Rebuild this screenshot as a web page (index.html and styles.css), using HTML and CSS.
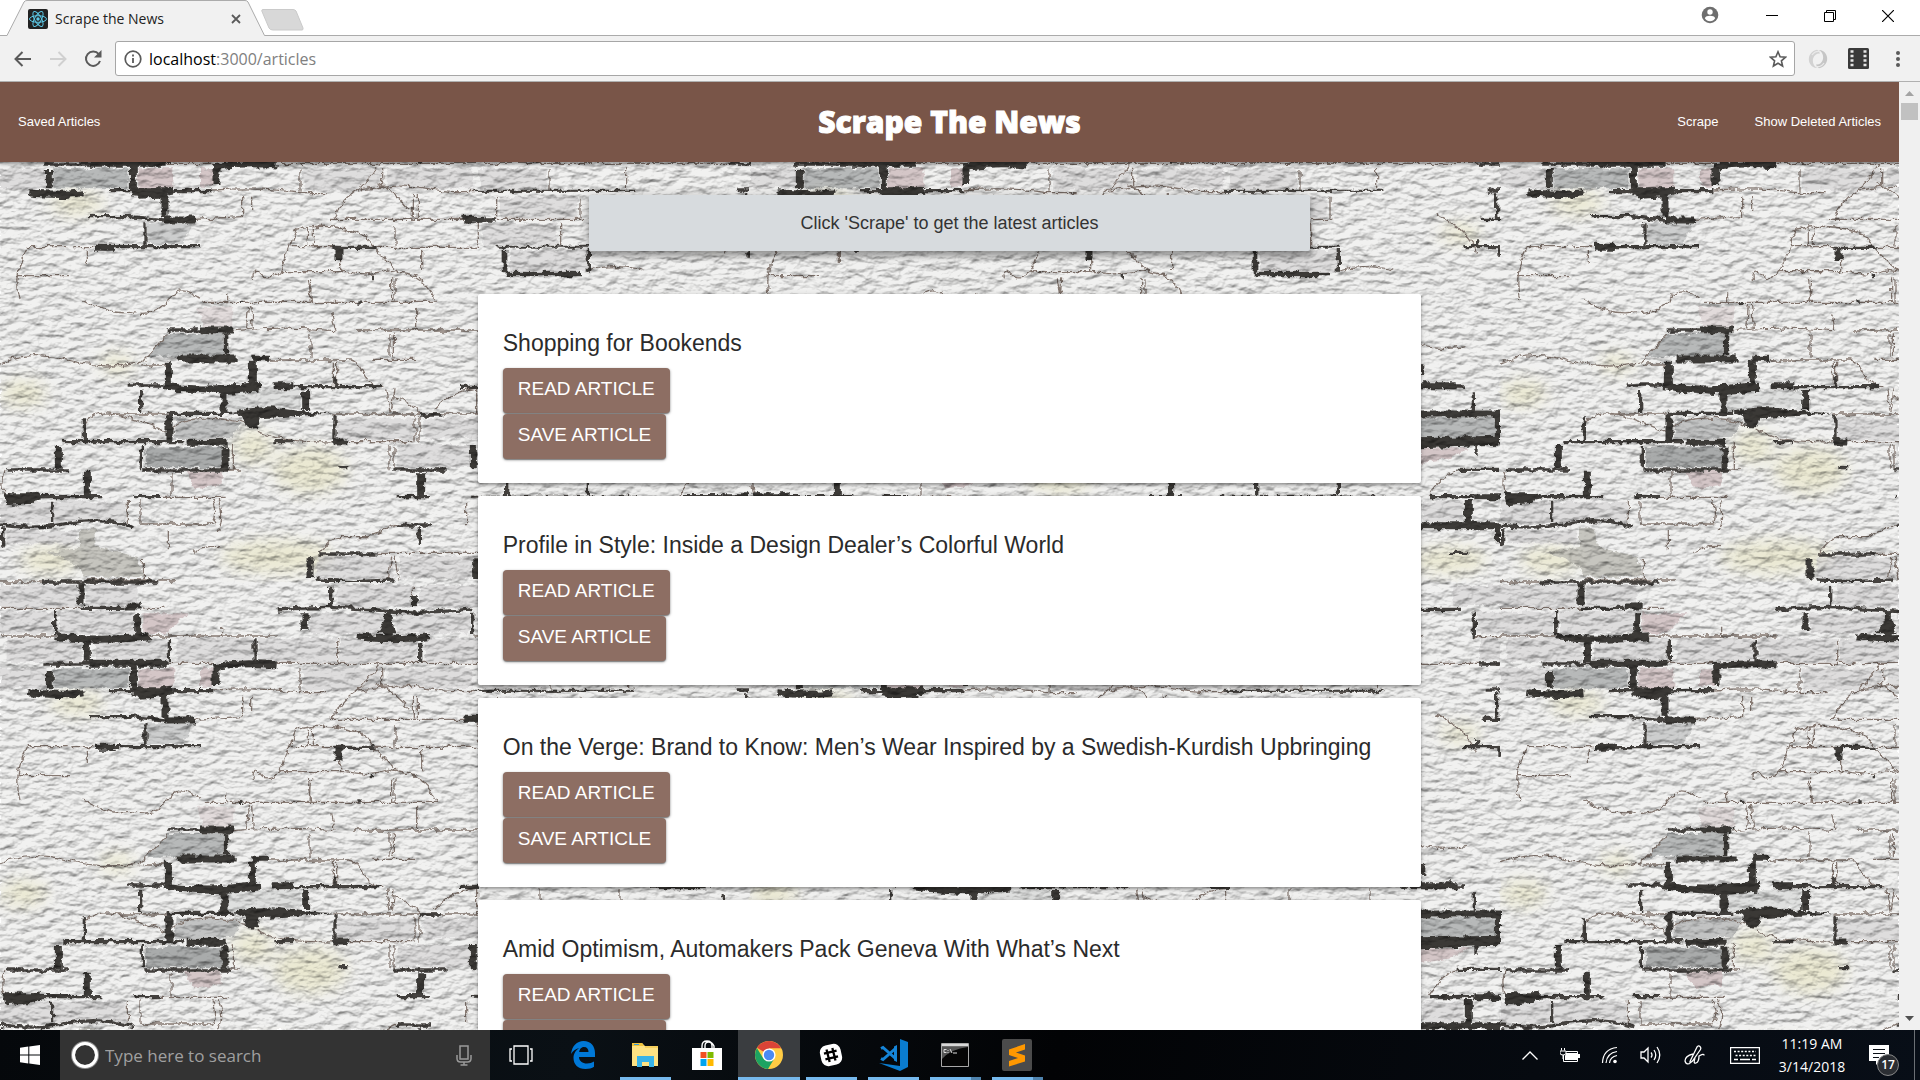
FILE: index.html
```html
<!DOCTYPE html>
<html lang="en">
<head>
<meta charset="utf-8">
<title>Scrape the News</title>
<link rel="stylesheet" href="styles.css">
</head>
<body>
<div class="desktop">

  <header class="tabstrip">
    <div class="tab">
      <svg class="tab-shape" viewBox="0 0 258 36" aria-hidden="true"><path d="M0 36V35.500L17 1.500Q18 .5 20 .5H238Q240 .5 241 2L257.500 35.500V36z" fill="#f1f1f1"/><path d="M0 35.500 17 2Q18 .5 20 .5H238Q240 .5 241 2L257.500 35.500" fill="none" stroke="#ababab"/></svg>
      <svg class="favicon" viewBox="0 0 20 20" aria-hidden="true"><rect width="20" height="20" rx="2" fill="#222"/><g fill="none" stroke="#5cc8e6" stroke-width="1"><ellipse cx="10" cy="10" rx="8.500" ry="3.300"/><ellipse cx="10" cy="10" rx="8.500" ry="3.300" transform="rotate(60 10 10)"/><ellipse cx="10" cy="10" rx="8.500" ry="3.300" transform="rotate(120 10 10)"/></g><circle cx="10" cy="10" r="1.700" fill="#5cc8e6"/></svg>
      <span class="tab-title">Scrape the News</span>
      <button class="tab-close" aria-label="Close tab"><svg width="10" height="10" viewBox="0 0 10 10"><path d="M1 1l8 8M9 1l-8 8" stroke="#5a5a5a" stroke-width="1.800"/></svg></button>
    </div>
    <button class="new-tab" aria-label="New tab"><svg width="43" height="22" viewBox="0 0 43 22"><path d="M2 .5H32Q34 .5 35 2L42 19Q42.500 21 41 21H12Q9 21 8 19L.8 2Q.5.500 2 .5z" fill="#d8d8d8" stroke="#cacaca"/></svg></button>
    <div class="window-controls">
      <button class="profile" aria-label="Profile"><svg width="18" height="18" viewBox="0 0 18 18"><circle cx="9" cy="9" r="8.300" fill="#6e6e6e"/><circle cx="9" cy="6" r="2.700" fill="#fff"/><path d="M3.800 12.200Q5 9.800 9 9.800T14.200 12.200Q12.400 15.200 9 15.200T3.800 12.200z" fill="#fff"/></svg></button>
      <button aria-label="Minimize"><svg width="12" height="12" viewBox="0 0 12 12"><path d="M0 5.500h12" stroke="#000"/></svg></button>
      <button aria-label="Restore"><svg width="12" height="12" viewBox="0 0 12 12"><path d="M.5 2.500h9v9h-9zM2.500 2.500v-2h9v9h-2" fill="none" stroke="#000"/></svg></button>
      <button aria-label="Close"><svg width="12" height="12" viewBox="0 0 12 12"><path d="M0 0l12 12M12 0 0 12" stroke="#000" stroke-width="1.200"/></svg></button>
    </div>
  </header>

  <div class="toolbar">
    <div class="nav-buttons">
      <button aria-label="Back"><svg width="18" height="16" viewBox="0 0 18 16"><path d="M17 8H2M8.500 1 1.500 8l7 7" fill="none" stroke="#5a5a5a" stroke-width="2"/></svg></button>
      <button aria-label="Forward"><svg width="18" height="16" viewBox="0 0 18 16"><path d="M1 8h15M9.500 1l7 7-7 7" fill="none" stroke="#d0d0d0" stroke-width="2"/></svg></button>
      <button aria-label="Reload"><svg width="18" height="18" viewBox="0 0 18 18"><path d="M14.800 4.200A7.200 7.200 0 1 0 16 11" fill="none" stroke="#5a5a5a" stroke-width="2"/><path d="M17.500 0v7.500H10z" fill="#5a5a5a"/></svg></button>
    </div>
    <div class="address">
      <svg width="18" height="18" viewBox="0 0 18 18" aria-hidden="true"><circle cx="9" cy="9" r="7.800" fill="none" stroke="#5a5a5a" stroke-width="1.700"/><path d="M9 8v5M9 4.500v2" stroke="#5a5a5a" stroke-width="1.800"/></svg>
      <span class="url" role="textbox" aria-label="Address">localhost<span class="url-path">:3000/articles</span></span>
      <button class="star" aria-label="Bookmark"><svg width="18" height="18" viewBox="0 0 18 18"><path d="M9 1.800l2.100 4.900 5.400.5-4.100 3.600 1.200 5.200L9 13.200 4.400 16l1.200-5.200L1.500 7.200l5.400-.5z" fill="none" stroke="#5a5a5a" stroke-width="1.600"/></svg></button>
    </div>
    <div class="extensions">
      <button aria-label="Formatter extension"><svg width="20" height="20" viewBox="0 0 20 20"><path d="M9 .8C2 2 -1.500 10 2.500 15.500 4 18 7 19.500 9.500 19 5 17 4 12 5.500 8.500 6.500 6 9 4 12 4.500 11.500 2.500 10 1.500 9 .8z" fill="#d2d2d2"/><path d="M11 19.200C18 18 21.500 10 17.500 4.500 16 2 13 .5 10.500 1 15 3 16 8 14.500 11.500 13.500 14 11 16 8 15.500 8.500 17.500 10 18.500 11 19.200z" fill="#c6c6c6"/><path d="M4 6Q7 1.500 12 2.500M16 14Q13 18.500 8 17.500" fill="none" stroke="#e9e9e9" stroke-width="1.300"/></svg></button>
      <button aria-label="Video extension"><svg width="21" height="21" viewBox="0 0 21 21"><rect width="21" height="21" rx="1.500" fill="#3a3a3a"/><path d="M2.500 3.500h3M2.500 8h3M2.500 12.500h3M2.500 17h3M15.500 3.500h3M15.500 8h3M15.500 12.500h3M15.500 17h3" stroke="#e6e6e6" stroke-width="2.400"/></svg></button>
      <button aria-label="Menu"><svg width="4" height="18" viewBox="0 0 4 18"><g fill="#5a5a5a"><circle cx="2" cy="3" r="2"/><circle cx="2" cy="9" r="2"/><circle cx="2" cy="15" r="2"/></g></svg></button>
    </div>
  </div>

  <div class="viewport">
    <main class="page">
      <svg class="wall" aria-hidden="true">
        <defs>
          <filter id="rough" x="0" y="0" width="100%" height="100%" color-interpolation-filters="sRGB">
            <feTurbulence type="fractalNoise" baseFrequency=".13" numOctaves="4" seed="4" result="n"/>
            <feDisplacementMap in="SourceGraphic" in2="n" scale="7" xChannelSelector="R" yChannelSelector="G" result="bricks"/>
            <feTurbulence type="fractalNoise" baseFrequency=".07 .13" numOctaves="5" seed="11" result="grain"/>
            <feDiffuseLighting in="grain" surfaceScale="2.200" diffuseConstant="1.060" lighting-color="#fff" result="relief"><feDistantLight azimuth="250" elevation="62"/></feDiffuseLighting>
            <feColorMatrix in="relief" type="matrix" values=".9 0 0 0 .11  0 .9 0 0 .11  0 0 .9 0 .11  0 0 0 1 0" result="soft"/>
            <feBlend in="bricks" in2="soft" mode="multiply"/>
          </filter>
          <filter id="blur" x="-60%" y="-60%" width="220%" height="220%"><feGaussianBlur stdDeviation="24"/></filter>
          <pattern id="bricks" width="750" height="500" patternUnits="userSpaceOnUse">
            <rect width="750" height="500" fill="#f1f1f0"/>
            <g transform="scale(.33333) translate(0 54)">
              <g fill="#e8e6c8" fill-opacity=".75" filter="url(#blur)">
                <ellipse cx="230" cy="310" rx="80" ry="35"/><ellipse cx="350" cy="790" rx="50" ry="30"/><ellipse cx="70" cy="880" rx="70" ry="40"/><ellipse cx="760" cy="1040" rx="60" ry="50"/><ellipse cx="930" cy="1110" rx="110" ry="70"/><ellipse cx="830" cy="1370" rx="170" ry="50"/><ellipse cx="150" cy="1380" rx="90" ry="40"/><ellipse cx="2130" cy="400" rx="60" ry="30"/><ellipse cx="2100" cy="1380" rx="110" ry="40"/>
              </g>
              <g fill="#cdcccd" fill-opacity=".55">
                <path d="M0 35h160v66H0zM180 35h225v66H180zM20 115h225v70H20zM285 115h215v70H285zM530 115h230v70H530zM775 115h235v70H775zM1020 115h235v70h-235zM1275 115h200v70h-200zM0 205h140v60H0zM910 205h235v66H910zM1160 205h260v60h-260zM930 40h230v60H930zM1190 40h220v60h-220zM0 1205h150v64H0zM160 1205h220v64H160zM20 1290h210v40H20zM0-45h230v66H0zM260-45h150v66H260zM1010-45h230v66h-230zM1260-45h210v66h-210zM950 1370h230v66H950zM1200 1370h225v66h-225zM1195 1035h220v66h-220zM1010 955h240v66h-240zM1270 955h170v60h-170z"/>
                <path d="M1500 290h230v64h-230zM1450 370h220v64h-220zM1530 450h230v64h-230zM1440 205h200v64h-200zM2180 35h70v66h-70zM2190 115h60v66h-60zM2110-45h140v60h-140zM2020 1205h120v60h-120z"/>
              </g>
              <g fill="#a9abab">
                <path d="M160 205h225v60H160z" opacity=".8"/><path d="M440 370h140l-30 62H440z" opacity=".5"/><path d="M500 702h170v68H440z" opacity=".8"/><path d="M530 955h200l-30 55-180 8z" opacity=".65"/><path d="M437 1042h228v60H437z"/><path d="M682 870h222v50l-222 20z" opacity=".25"/><path d="M2010 955h232v60h-232z" opacity=".8"/>
              </g>
              <g fill="#c8b3b5" opacity=".7"><path d="M415 205h105v60H415zM600 205h40v55h-40zM555 1115h110v40l-80 10zM430 40h130l-60 60h-70zM2010 1045h150l-60 30-90 15z"/><path d="M590 620h110v60l-90 5z" opacity=".5"/></g>
              <path d="M140 1358 240 1340V1285h45l5 55 120 30 20 60H250Q240 1380 140 1358z" fill="#bcbab3" opacity=".8"/>
              <g fill="none" stroke="#857871" stroke-width="3.800">
                <path d="M0 25h240M430 25h60M0 108h170M450 108h380M665 80v28M500 190h140M830 190h240M1013 118v68M1080 190h1170M900 205v70M1148 205v60M640 270q150-10 250 8h90M1080 270q130-20 200-5t170 8h450M728 290v62M755 290v40M1240 285v70M1252 285v70M585 358l140-8M990 358h760M1000 358q20-50 60-78t80-90M1130 250q60 30 100 80"/>
                <path d="M925 385v50M940 385v50M1185 375v62M220 440h60M80 440h120M870 440h150M1130 442h310M265 450v42M1022 480v40M1265 450v60M50 527h160M80 445Q40 520 60 600M890 385 840 515M880 390q120-30 220 20 30 50 100 108 70 0 110 90M760 540q-5-40 20-20 20 30 60-5h200q60 15 120-5l90 15M925 535l10 70M935 535l-5 70M1175 535v70M1185 535v70M680 580v30M610 607h700M745 615l-5 70M755 615l5 70M995 640l10 50M1250 620v70M700 692q150-15 300 0M1065 690h400M930 700v70M1170 700v70M1180 700v70M415 795l85-90M430 795h80M810 780h240q20 0 40 40t60 40M1120 778h125"/>
                <path d="M420 640q60 0 90-45t90 0M250 600q80 50 160 35M0 790q80-40 200-10t210 10M1000 785v70M1010 785v70M1160 865l10 70M1182 865l-8 70M1180 890q40 10 80 50M1300 930q60-60 130-65v75M330 942h170M1000 942h440M255 970q30-50 120-20t130 50M510 990q40-40 130-35t120 30M770 990q60 40 240 35M1245 950v75M1260 950v75M1010 1025h230M1170 1035v70M1182 1035v70M700 1030v80M690 1110h30M15 1110q-15 50 5 80M513 1120v70M480 1192h200M385 1200v70M420 1200v70M635 1200q20 40 5 70M655 1200q20 50 0 90M420 1272h220M505 1290v55M580 1355q40-20 80-15M430 1380v60M0 1446h120M475 1440h50M255 1440h200M1400 1210v60M955 1360q40-50 60-50t90 0l90-40M1130 1360h310M1175 1370l-10 70M1185 1370l10 70M0-54h120M1240-40v30M2170 110h80M2120 1110q-50 20-85 80M1950 700q60 60 200 40M2060 340q100 60 120 120M1650 210v65M1490 290v65M1740 290v65M1435 365v75M1682 365v75M1770 510q70-20 160 0"/>
                <path d="M1500 28h480M1420 108h600M1560 118v70M1800 118v70M1640 35v70M1880 205v60M1480 607h500M1480 775h420M1600 615v70M1820 700v70M1500 940h500M1620 865v70M1860 865v70M1500 1108h400M1450 1275h540M1640 1285v70M1880 1285v60M1500 1358h480"/>
              </g>
              <g fill="none" stroke="#45423f" stroke-width="10">
                <path d="M240 25h140M167 30v76M830 30q150-15 300 0t290-5M1418 35v70M508 120v66M765 118v70M1262 130v60M130 192h140M330 272h80M520 272h120M270 350h120l105 10M345 440h255M1000 442h130M500 690h100M380 855h110M880 860h260M1380 862h60M1005 830v30M422 870v66M500 940h200M1260 945h70M253 955v66M1005 945v80M190 1025h360M427 1035v70M20 1110h190M430 1110h260M1180 1110h160M120 1190h190M400 1190h80M1190 1190h100M155 1205v64M0 1275q100 15 200-5t200 10M1190 1275h100M8 1285v55M1258 1285v50M955 1362h175M120 1446h355M950 1440l110 5 120-5M120-54h355M992-40v60M435 370v70M820 1025h60M1015 1103h30M720 607h10M1072 606h10M1115 530h10" />
                <path d="M1950 28h180M2173 35v76M2190 192h60M2210 270h40M2240 280v75M2195 358h55M2183 415v28M2140 440h110M2247 445v25M1765 450v65M1410 360h80M1950 858h195M2018 790v35M2170 880v60M2178 1030v32M2120 1108h130M2040 1190h130M2100 1360h55M1520 1115v70M1765 1115v70"/>
                <path d="M1490 440h280M1420 272h480M1410 1190h500" stroke-width="6"/>
              </g>
              <g fill="none" stroke="#3d3b38" stroke-width="21">
                <path d="M380 18h45M413 40v66M170 110q130 15 280 0M1165 35v75M1070 110q100 12 220 0M915 40v50M262 120v66M270 190h230M640 200q90-15 190-5M148 210v55M400 195v70M648 205v50M85 278q90 10 165 0M395 275q70 10 125-5M495 290v60M495 360h90M285 442h60M1017 445v35M600 690h100M530 777h180M757 775h50M505 785v70M757 785v70M490 857q100 20 290 0M815 857h65M672 870v70M917 870v60M507 945v80M757 945v40M560 1027h120M675 1040v66M175 1035v70M1420 1035v70M262 1115v75M1262 1120v66M20 1188q40 15 100 0M1000 1026h45M930 1375v62M1430 1375v62M243-50v66M1243-15v36M1390 358h60"/>
                <path d="M678 700v66M1520 522h220M1515 450v70" stroke-width="14"/>
                <path d="M1980 857h140M2010 942h240M2245 945v80M2010 1022q100 12 240 0M2010 1030h140M2170 1190h80M2155 1200v70M2010 1277h240M2248 1280v50"/>
              </g>
              <path d="M700 935Q780 915 840 925T1000 940L860 950 780 955 770 985 740 980 730 950zM490 852l140 8 150-15-5 30-120 8-120-8zM10 1180h110l-20 28-80 8zM2010 1012l235-5v30l-235 8zM85 270l175 5-60 20-80-5zM390 262h130l-20 30-80 4zM1130 100l35-60 25 60z" fill="#3b3936"/>
            </g>
          </pattern>
        </defs>
        <rect width="100%" height="100%" fill="url(#bricks)" filter="url(#rough)"/>
      </svg>

      <nav class="site-nav">
        <ul class="links"><li><a href="#saved">Saved Articles</a></li></ul>
        <h1>Scrape The News</h1>
        <ul class="links links-right"><li><a href="#scrape">Scrape</a></li><li><a href="#deleted">Show Deleted Articles</a></li></ul>
      </nav>

      <p class="notice">Click 'Scrape' to get the latest articles</p>

      <section class="articles">
        <article class="card"><h2>Shopping for Bookends</h2><button class="btn">READ ARTICLE</button><button class="btn">SAVE ARTICLE</button></article>
        <article class="card"><h2>Profile in Style: Inside a Design Dealer’s Colorful World</h2><button class="btn">READ ARTICLE</button><button class="btn">SAVE ARTICLE</button></article>
        <article class="card"><h2>On the Verge: Brand to Know: Men’s Wear Inspired by a Swedish-Kurdish Upbringing</h2><button class="btn">READ ARTICLE</button><button class="btn">SAVE ARTICLE</button></article>
        <article class="card"><h2>Amid Optimism, Automakers Pack Geneva With What’s Next</h2><button class="btn">READ ARTICLE</button><button class="btn">SAVE ARTICLE</button></article>
      </section>
    </main>
    <div class="scrollbar" aria-hidden="true">
      <svg width="9" height="5" viewBox="0 0 9 5"><path d="M0 5 4.500 0 9 5z" fill="#a3a3a3"/></svg>
      <div class="thumb"></div>
      <svg class="down" width="9" height="5" viewBox="0 0 9 5"><path d="M0 0h9L4.500 5z" fill="#505050"/></svg>
    </div>
  </div>

  <footer class="taskbar">
    <button class="start" aria-label="Start"><svg width="20" height="20" viewBox="0 0 20 20"><path d="M0 2.800 8.300 1.600V9.500H0zM9.300 1.400 20 0V9.500H9.300zM0 10.500H8.300V18.400L0 17.200zM9.300 10.500H20V20L9.300 18.600z" fill="#fff"/></svg></button>
    <div class="search">
      <svg width="28" height="28" viewBox="0 0 28 28" aria-hidden="true"><circle cx="14" cy="14" r="12" fill="none" stroke="#8c8c8c" stroke-width="4"/><circle cx="14" cy="14" r="11.500" fill="none" stroke="#fff" stroke-width="3"/></svg>
      <input type="text" aria-label="Search" placeholder="Type here to search">
      <svg width="16" height="21" viewBox="0 0 16 21" aria-hidden="true"><path d="M4 1h8v13H4zM1 10v3.500Q1 17 4.500 17h7Q15 17 15 13.500V10M8 17v3M4.500 20h7" fill="none" stroke="#9a9a9a" stroke-width="1.500"/></svg>
    </div>
    <div class="tasks">
      <button aria-label="Task View"><svg width="24" height="20" viewBox="0 0 24 20"><path d="M5 1h14v18H5zM3 4H1v12h2M21 4h2v12h-2" fill="none" stroke="#fff" stroke-width="1.300"/></svg></button>
      <button aria-label="Edge"><svg width="26" height="28" viewBox="0 0 26 28"><path d="M1 13C2 5 7 0 13.500 0 21 0 25 5.500 25 12v4H9c0 4 3.500 6.500 8 6.500 3 0 5-.8 7-2v5.300c-2 1.400-5 2.200-8.500 2.200C8 28 3.500 23.500 3.500 17c0-4.500 2.500-8 6-10C6 7.500 3 9.500 1 13zm8.200-2h9.300c0-3-1.500-5-4.500-5s-4.500 2.500-4.800 5z" fill="#0078d7"/></svg></button>
      <button class="running" aria-label="File Explorer"><svg width="28" height="26" viewBox="0 0 28 26"><path d="M1 1h10l3 3h13v20H1z" fill="#fde283"/><path d="M1 1h10l2 3H1z" fill="#f0c33c"/><path d="M3 2h5v1H3z" fill="#3a9bd8"/><path d="M14 6h13v-2H14z" fill="#f5cf5c"/><path d="M6 25V14h17v11h-5v-5h-7v5z" fill="#38b3e8"/></svg></button>
      <button aria-label="Store"><svg width="30" height="30" viewBox="0 0 30 30"><path d="M10 10V6q0-5 5-5t5 5v3M13 10V6q0-4 3.500-4T22 6v4" fill="none" stroke="#fff" stroke-width="1.400"/><path d="M0 8h30v22H0z" fill="#fff"/><path d="M8.500 12h6v6h-6z" fill="#f25022"/><path d="M15.500 12h6v6h-6z" fill="#7fba00"/><path d="M8.500 19h6v7h-6z" fill="#00a4ef"/><path d="M15.500 19h6v7h-6z" fill="#ffb900"/></svg></button>
      <button class="running active" aria-label="Chrome"><svg width="28" height="28" viewBox="0 0 28 28"><circle cx="14" cy="14" r="14" fill="#fc4"/><path d="M14 14 2 6.800A14 14 0 0 1 26.200 7.300H14z" fill="#db4437"/><path d="M1.900 7A14 14 0 0 0 13 28l6.300-10.500L14 14 8 17z" fill="#1da362"/><circle cx="14" cy="14" r="6.600" fill="#fff"/><circle cx="14" cy="14" r="5.200" fill="#4a8af4"/></svg></button>
      <button class="running" aria-label="Slack"><svg width="24" height="24" viewBox="0 0 24 24"><rect x="1.500" y="1.500" width="21" height="21" rx="7" fill="#fff" transform="rotate(-12 12 12)"/><g transform="rotate(-14 12 12)" stroke="#000" stroke-width="2.300"><path d="M9 5.500v13M15 5.500v13M5.500 9h13M5.500 15h13"/></g></svg></button>
      <button class="running" aria-label="Visual Studio Code"><svg width="30" height="32" viewBox="0 0 30 32"><path d="M22 0 30 3V28L22 32 1 24l21 3z" fill="#0a7ccf"/><path d="M3 9.500 5 8.500 18 20M18 9 5 20.500 3 19.500" fill="none" stroke="#1585d8" stroke-width="3"/><path d="M16 7.500 19 6v17l-3-1.500z" fill="#1585d8"/></svg></button>
      <button class="running grouped" aria-label="Command Prompt"><svg width="28" height="24" viewBox="0 0 28 24"><path d="M.5.500h27v23H.5z" fill="#050505" stroke="#a9a9a9"/><path d="M1 1h26v2.500H1z" fill="#d8d8d8"/><path d="M1 4h26Q10 6 1 16z" fill="#555"/><path d="M3 6.500h2.500M3 6.500v3h2.500M7 7v1M7 9v1M9 6l2 4M12 10h4" stroke="#ddd" fill="none"/></svg></button>
      <button class="running grouped" aria-label="Sublime Text"><svg width="30" height="32" viewBox="0 0 30 32"><rect width="30" height="32" rx="2" fill="#4b4b4b"/><path d="M7 10.500 23 5v5.500L14 13.500 23 16.500v6L7 27.500V22l9-3L7 16z" fill="#ff9800"/></svg></button>
    </div>
    <div class="tray">
      <button aria-label="Show hidden icons"><svg width="16" height="9" viewBox="0 0 16 9"><path d="M.5 8.500 8 1l7.500 7.500" fill="none" stroke="#fff" stroke-width="1.300"/></svg></button>
      <button aria-label="Battery"><svg width="20" height="14" viewBox="0 0 20 14"><path d="M3.500 3.500h14v10H3.500z" fill="none" stroke="#fff"/><path d="M6 5h11v7H5V8z" fill="#fff"/><path d="M18 6h2v4h-2z" fill="#fff"/><path d="M1.500 0v2.500M4.500 0v2.500M0 3h6v2Q6 7 3 7T0 5zM3 7v4" fill="#070b12" stroke="#fff"/></svg></button>
      <button aria-label="Network"><svg width="18" height="18" viewBox="0 0 18 18"><g fill="none" stroke="#fff" stroke-width="1.200"><path d="M1.500 17Q2 3 16 1.500M5 17Q6 7 16 5.500M8.500 17Q9 11 16 9.500"/></g><circle cx="14" cy="15.500" r="1.800" fill="#fff"/></svg></button>
      <button aria-label="Volume"><svg width="21" height="18" viewBox="0 0 21 18"><path d="M1 6h3l4-4v14l-4-4H1zM11 6.500q2 2.500 0 5M14 4q3.500 5 0 10M17 1q5.500 8 0 16" fill="none" stroke="#fff" stroke-width="1.300"/></svg></button>
      <button class="pen" aria-label="Windows Ink"><svg width="21" height="20" viewBox="0 0 21 20"><path d="M6 16.500 13 2q1.500-2 3-.5t.5 3L8.500 16 6 18zM9 9Q1 11 1 16q1 4 5 2.500M11 13q-2 6 1 5t3-7q5-3 5-.5" fill="none" stroke="#fff" stroke-width="1.300"/></svg></button>
      <button class="keyboard" aria-label="Touch keyboard"><svg width="30" height="17" viewBox="0 0 30 17"><path d="M.5.500h29v16H.5z" fill="none" stroke="#fff" stroke-width="1.400"/><path d="M4 4.500h22M5.500 8.500h20" stroke="#fff" stroke-width="1.600" stroke-dasharray="2 1.600"/><path d="M4 12.500h4M10 12.500h10M22 12.500h4" stroke="#fff" stroke-width="1.400"/></svg></button>
      <button class="clock"><time>11:19 AM</time><time>3/14/2018</time></button>
      <button class="notifications" aria-label="17 notifications"><svg width="20" height="20" viewBox="0 0 20 20"><path d="M0 0h20v16H11l-4 4v-4H0z" fill="#fff"/><path d="M4 4.500h12M4 8.500h12M4 12.500h6" stroke="#0a0f16" stroke-width="1.200"/></svg><span class="badge">17</span></button>
      <button class="show-desktop" aria-label="Show desktop"></button>
    </div>
  </footer>
</div>
</body>
</html>
```
FILE: styles.css
```css
* { box-sizing: border-box; }
body {
  margin: 0;
  font-family: "Liberation Sans", Arial, sans-serif;
  color: #2b2b2b;
}
button {
  padding: 0;
  border: 0;
  background: none;
  font: inherit;
  color: inherit;
}
svg { display: block; flex: none; }
.desktop {
  display: flex;
  flex-direction: column;
  height: 100vh;
  overflow: hidden;
}

/* browser frame */
.tabstrip {
  display: flex;
  align-items: flex-start;
  flex: none;
  height: 36px;
  padding-left: 7px;
  background: linear-gradient(#ababab, #ababab) bottom / 100% 1px no-repeat #fff;
  font-family: "Open Sans", "Noto Sans", sans-serif;
}
.tab {
  position: relative;
  display: flex;
  align-items: center;
  width: 258px;
  height: 36px;
  padding: 2px 24px 0 21px;
}
.tab-shape {
  position: absolute;
  inset: 0;
  width: 100%;
  height: 100%;
}
.favicon { position: relative; width: 20px; height: 20px; }
.tab-title {
  position: relative;
  flex: 1;
  margin-left: 7px;
  font-size: 14px;
  line-height: 20px;
  color: #222;
}
.tab-close { position: relative; }
.new-tab { margin: 9px 0 0 -4px; }
.window-controls {
  display: flex;
  height: 32px;
  margin-left: auto;
  padding-right: 3px;
}
.window-controls button {
  display: grid;
  place-items: center;
  width: 58px;
}
.window-controls .profile {
  width: 66px;
  padding-bottom: 2px;
}
.toolbar {
  display: flex;
  align-items: center;
  flex: none;
  height: 46px;
  padding: 0 2px 0 5px;
  background: #f1f1f1;
  border-bottom: 1px solid #b0b0b0;
}
.nav-buttons, .extensions { display: flex; }
.nav-buttons button, .extensions button {
  display: grid;
  place-items: center;
  width: 35px;
  height: 35px;
}
.extensions { margin-left: 3px; }
.extensions button { width: 40px; }
.address {
  display: flex;
  align-items: center;
  flex: 1;
  height: 35px;
  margin-left: 5px;
  padding: 0 7px 0 8px;
  border: 1px solid #a6a6a6;
  border-radius: 3px;
  background: #fff;
}
.url {
  flex: 1;
  margin-left: 7px;
  font-family: "Open Sans", "Noto Sans", sans-serif;
  font-size: 16px;
  line-height: 24px;
  color: #000;
}
.url-path { color: #808080; }

/* web page */
.viewport {
  display: flex;
  flex: 1;
  min-height: 0;
}
.page {
  position: relative;
  isolation: isolate;
  flex: 1;
  overflow: hidden;
}
.wall {
  position: absolute;
  inset: 0;
  z-index: -1;
  width: 100%;
  height: 100%;
}
.scrollbar {
  display: flex;
  flex-direction: column;
  align-items: center;
  width: 21px;
  padding: 9px 0;
  background: #f0f0f0;
}
.thumb {
  width: 17px;
  height: 17px;
  margin-top: 7px;
  background: #c1c1c1;
}
.down { margin-top: auto; }
.site-nav {
  display: grid;
  grid-template-columns: 1fr auto 1fr;
  align-items: center;
  height: 80px;
  background: #795548;
  color: #fff;
  box-shadow: 0 2px 3px rgba(0, 0, 0, .3), 0 1px 6px rgba(0, 0, 0, .15);
}
.links {
  display: flex;
  margin: 0;
  padding: 0;
  list-style: none;
}
.links-right { justify-content: flex-end; }
.links a {
  display: block;
  padding: 0 18px;
  font-size: 13px;
  line-height: 80px;
  color: #fff;
  text-decoration: none;
}
.site-nav h1 {
  margin: 0;
  font-family: "Open Sans", sans-serif;
  font-size: 30px;
  font-weight: 800;
  line-height: 40px;
  -webkit-text-stroke: 1px #fff;
}
.notice {
  width: 38%;
  margin: 33px auto 43px;
  border-radius: 2px;
  background: #d7dbde;
  font-size: 18px;
  line-height: 56px;
  text-align: center;
  color: #333;
  box-shadow: 0 5px 6px rgba(0, 0, 0, .3), 0 1px 12px rgba(0, 0, 0, .2);
}
.articles {
  display: flex;
  flex-direction: column;
  gap: 13px;
  width: calc(50% - 6px);
  margin: 0 auto;
}
.card {
  display: flex;
  flex-direction: column;
  align-items: flex-start;
  gap: 1px;
  padding: 30px 25px 24px;
  border-radius: 2px;
  background: #fff;
  box-shadow: 0 2px 3px rgba(0, 0, 0, .3), 0 1px 6px rgba(0, 0, 0, .15);
}
.card h2 {
  margin: 0 0 5px;
  font-size: 23px;
  font-weight: 400;
  line-height: 38px;
}
.btn {
  height: 45px;
  padding: 0 15px 4px;
  border-radius: 4px;
  background: #8d6e63;
  font-size: 19px;
  line-height: 40px;
  color: #fff;
  box-shadow: 0 1px 3px rgba(0, 0, 0, .4), 0 1px 1px rgba(0, 0, 0, .3);
}

/* taskbar */
.taskbar {
  display: flex;
  flex: none;
  height: 50px;
  background: linear-gradient(100deg, #05080b, #0a1015 30%, #020305 55%, #060a10 80%, #080e17);
  font-family: "Open Sans", "Noto Sans", sans-serif;
  color: #fff;
}
.taskbar button {
  display: grid;
  place-items: center;
}
.taskbar .start { width: 60px; }
.search {
  display: flex;
  align-items: center;
  width: 430px;
  padding: 0 18px 0 11px;
  background: #333;
}
.search input {
  flex: 1;
  min-width: 0;
  padding: 0;
  margin-left: 6px;
  border: 0;
  background: none;
  font-family: inherit;
  font-size: 17px;
  color: #fff;
}
.search input::placeholder { color: #a0a0a0; opacity: 1; }
.tasks { display: flex; }
.taskbar .tasks button {
  width: 62px;
}
.running { background: linear-gradient(#76b9ed, #76b9ed) bottom center / 51px 3px no-repeat; }
.grouped { background: linear-gradient(90deg, #76b9ed 41px, #4f83ad 41px) bottom center / 51px 3px no-repeat; }
.active { background: linear-gradient(#76b9ed, #76b9ed) bottom center / 62px 3px no-repeat #3a3d40; }
.tray { display: flex; margin-left: auto; }
.tray button { width: 40px; }
.tray .pen { width: 48px; }
.tray .keyboard { width: 54px; }
.tray .clock {
  width: 80px;
  align-content: center;
  font-size: 14px;
  line-height: 23px;
}
.tray .notifications {
  position: relative;
  width: 54px;
  margin-right: 8px;
}
.badge {
  position: absolute;
  left: 25px;
  top: 24px;
  width: 22px;
  height: 22px;
  border: 1px solid #888;
  border-radius: 50%;
  background: #2b2e33;
  font-size: 12px;
  font-weight: 600;
  line-height: 20px;
  text-align: center;
}
.tray .show-desktop {
  width: 6px;
  border-left: 1px solid #6b6f74;
}
```
